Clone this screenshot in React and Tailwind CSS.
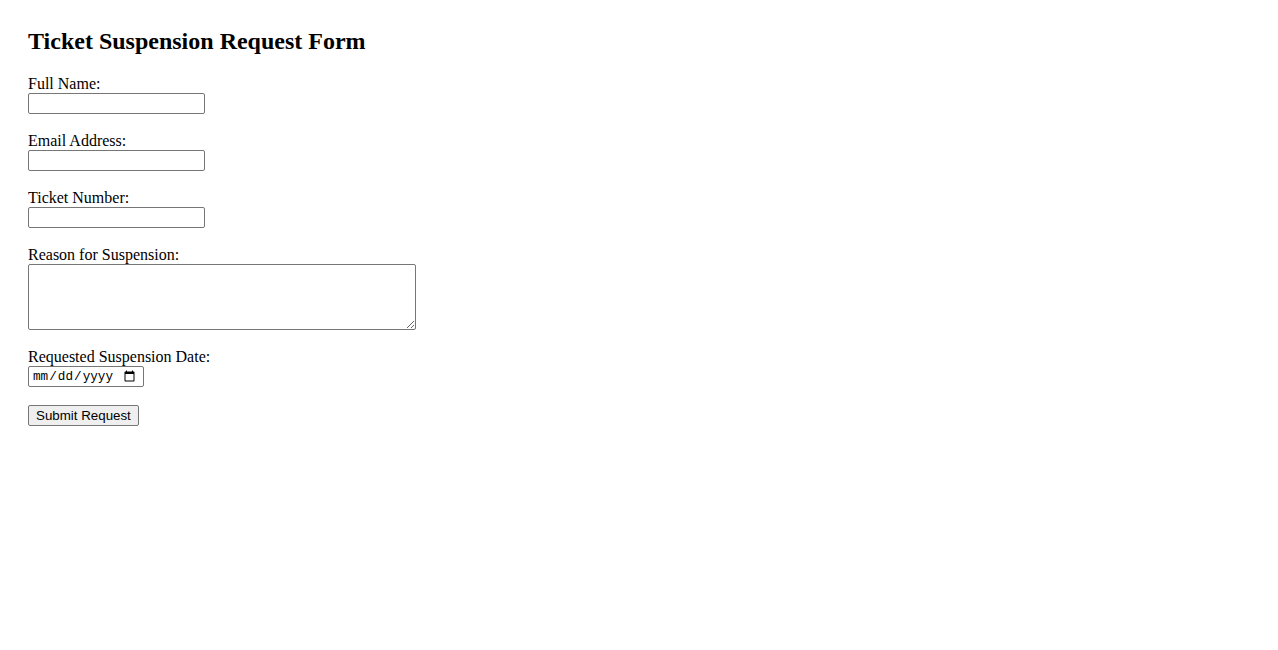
export default function App() {
  const fields = [
    { label: "Full Name:", type: "text" },
    { label: "Email Address:", type: "email" },
    { label: "Ticket Number:", type: "text" },
  ];

  return (
    <div className="min-h-screen bg-white px-[28px] pt-[27px] text-black font-['Liberation_Serif',serif]">
      <h2 className="text-[24px] font-bold leading-[28px] mb-[20px]">Ticket Suspension Request Form</h2>

      <form className="flex flex-col items-start" onSubmit={(e) => e.preventDefault()}>
        {fields.map((f) => (
          <div key={f.label} className="flex flex-col items-start mb-[18px]">
            <label className="text-[16px] leading-[18px]">{f.label}</label>
            <input
              type={f.type}
              className="w-[177px] h-[21px] border border-[#767676] rounded-[2px] px-[2px] text-[13.33px] font-['Liberation_Sans',sans-serif] bg-white"
            />
          </div>
        ))}

        <div className="flex flex-col items-start mb-[18px]">
          <label className="text-[16px] leading-[18px]">Reason for Suspension:</label>
          <textarea className="w-[388px] h-[66px] border border-[#767676] rounded-[2px] px-[2px] text-[13.33px] font-['Liberation_Mono',monospace] bg-white" />
        </div>

        <div className="flex flex-col items-start mb-[18px]">
          <label className="text-[16px] leading-[18px]">Requested Suspension Date:</label>
          <input
            type="date"
            className="w-[116px] h-[21px] border border-[#767676] rounded-[2px] pl-[3px] pr-[5px] text-[12.67px] font-['Liberation_Mono',monospace] bg-white"
          />
        </div>

        <button
          type="submit"
          className="h-[21px] px-[7px] border border-[#767676] rounded-[2px] bg-[#efefef] text-[13.33px] leading-[15px] font-['Liberation_Sans',sans-serif] text-black"
        >
          Submit Request
        </button>
      </form>
    </div>
  );
}
